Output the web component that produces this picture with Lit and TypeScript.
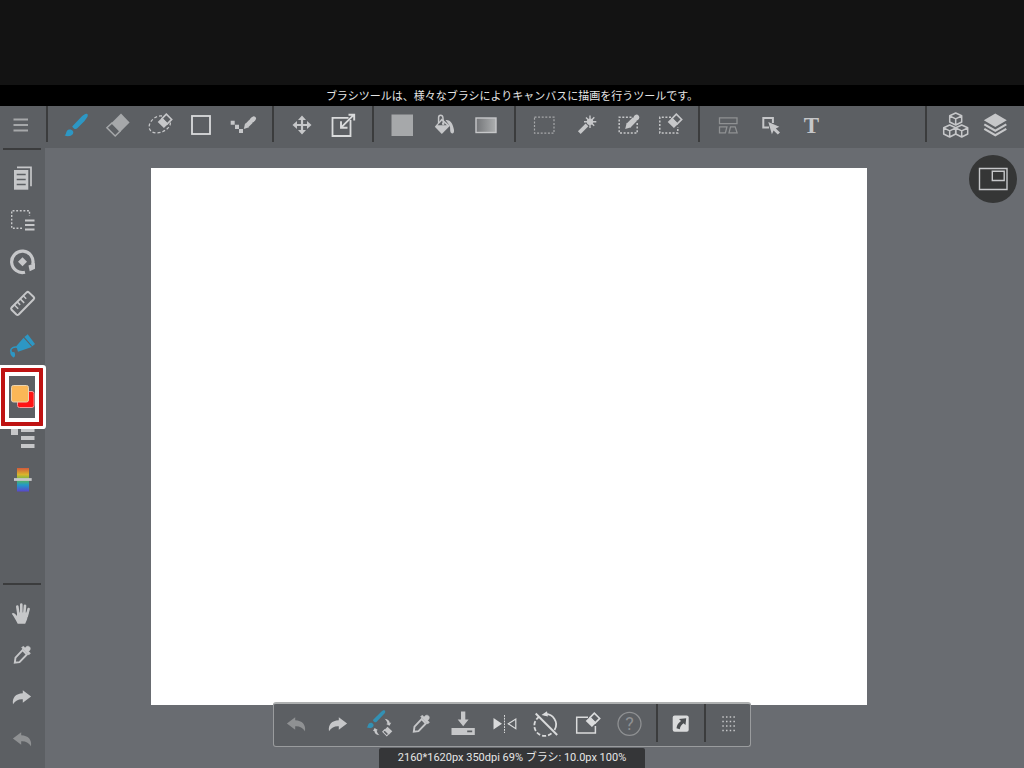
import { LitElement, html, svg, css, TemplateResult, SVGTemplateResult } from "lit";
import { customElement, property, state } from "lit/decorators.js";
import { classMap } from "lit/directives/class-map.js";

/* Small tilted eraser shared by the erasing tools. */
const miniEraser = svg`
  <path d="M22.300 5.200L27.700 10.400L23.300 14.900L18 9.600Z" fill="#5c5f63" stroke="currentColor" stroke-width="1.600"/>
  <path d="M18 8.800L24 14.900L19.900 19L13.700 13Z" fill="currentColor"/>`;

const cube = (x: number, y: number) => svg`
  <path fill="none" stroke="currentColor" stroke-width="1.500" stroke-linejoin="round"
    d="M${x} ${y - 6}l6 2.800v6.200l-6 3-6-3v-6.200zm-6 2.800l6 3 6-3m-6 3v6.200"/>`;

const icons: Record<string, SVGTemplateResult> = {
  menu: svg`<path d="M8.500 10.500h14.500M8.500 16h14.500M8.500 21.500h14.500" stroke="currentColor" stroke-width="1.800"/>`,
  brush: svg`
    <path d="M12.400 17.300L21.700 7.600c1.700-1.700 3.600-3.300 5.100-2.900 1.400.5 1.200 2.300.2 3.800L24.300 12.200 17.300 19.300c-.9.900-2.400.8-3.400.1-1-.7-1.800-1.600-1.500-2.100z" fill="currentColor"/>
    <path d="M4.600 26.300c1.800-.6 1.300-3 2.400-4.500 1.500-1.900 5-1.400 6 .5 1 2.200-.6 4.300-3.200 4.700-2 .3-4 .1-5.200-.7z" fill="currentColor"/>`,
  eraser: svg`
    <path d="M10 14L4.900 18.700 13.200 27 18 22.300z" fill="none" stroke="currentColor" stroke-width="1.500"/>
    <path d="M9.500 14L19 4.500l8.600 8.900L18.300 22.800z" fill="currentColor"/>`,
  lasso: svg`
    <path d="M18 7C12 6 4.500 12.500 5.200 18.500S14 25 19 22.500s8-6 7.300-9.500" fill="none" stroke="currentColor" stroke-width="1.300" stroke-dasharray="3 2"/>
    ${miniEraser}`,
  square: svg`<rect x="6" y="7" width="18" height="18" fill="none" stroke="currentColor" stroke-width="1.800"/>`,
  dotpen: svg`
    <path d="M2.700 11.700h4v4h4.300v4.300h4v4h-4v-4h-4v-4.300h-4.300z" fill="currentColor"/>
    <path d="M15.800 20l1.300-5.700 4 4z" fill="currentColor"/>
    <path d="M18.900 16.500L23 12.300M23.700 11.700l2-2" stroke="currentColor" stroke-width="4.600"/>
    <path d="M23.500 11.800l2.300-2.300" stroke="currentColor" stroke-width="4.400" stroke-linecap="round"/>`,
  move: svg`<path d="M16 6.500l4 4.500h-2.900v3.900H21V12l4.500 4-4.500 4v-2.900h-3.900V21H20l-4 4.500L12 21h2.900v-3.900H11V20l-4.500-4L11 12v2.900h3.900V11H12z" fill="currentColor"/>`,
  transform: svg`
    <path d="M22.500 11V27h-18V8.800h16" fill="none" stroke="currentColor" stroke-width="1.800"/>
    <path d="M13 18.700L26 5.700M20.500 5.700H26.200V11.500M13 12.300V18.700H19.500" fill="none" stroke="currentColor" stroke-width="1.900"/>`,
  fill: svg`<rect x="5.500" y="5.500" width="21.500" height="21.500" fill="currentColor"/>`,
  bucket: svg`
    <path d="M13.700 9.500l8.300 7.300-8.200 8.300-7-7.300z" fill="currentColor"/>
    <path d="M14 11.800l4.800 4.500h-9.300z" fill="#5c5f63"/>
    <path d="M10.600 14V8.500c0-3 4-3 4.300 0l.5 6" fill="none" stroke="currentColor" stroke-width="1.500"/>
    <circle cx="15.200" cy="14.800" r="1.300" fill="currentColor"/>
    <path d="M17.500 11c5.500-.5 7.500 4.500 8.500 10 .6 4.500-3.500 4.500-3.800.8-.2-2 .3-4-1-5.800z" fill="currentColor"/>`,
  gradient: svg`
    <defs><linearGradient id="fade"><stop offset="0" stop-color="#737578"/><stop offset="1" stop-color="#adafb0"/></linearGradient></defs>
    <rect x="6" y="9" width="20" height="14.500" fill="url(#fade)" stroke="currentColor" stroke-width="1.400"/>`,
  select: svg`<rect x="6.500" y="8.200" width="19.500" height="16" fill="none" stroke="currentColor" stroke-width="1.200" stroke-dasharray="2 1.600"/>`,
  wand: svg`
    <path d="M9.300 23.600L17 15.800" stroke="currentColor" stroke-width="3.800"/>
    <circle cx="20" cy="12.700" r="3.200" fill="currentColor"/>
    <path d="M20 6.500v12.500M14 12.700h12.300M16 8.500l8.200 8.300M24.300 8.300L18 15" stroke="currentColor" stroke-width="1.400"/>`,
  selectPen: svg`
    <path d="M19.500 8.300H7.200V24h18V14" fill="none" stroke="currentColor" stroke-width="1.500" stroke-dasharray="2 1.600"/>
    <path d="M13.200 20l1.500-6.200 4.500 4.500z" fill="currentColor"/>
    <path d="M16.600 16.500l6.300-6.400M23.600 9.400l1.700-1.700" stroke="currentColor" stroke-width="5.400"/>
    <path d="M23.800 9.200l1-1" stroke="currentColor" stroke-width="5" stroke-linecap="round"/>`,
  selectEraser: svg`
    <path d="M17 8.300H5.800V24h18v-6" fill="none" stroke="currentColor" stroke-width="1.500" stroke-dasharray="2 1.600"/>
    ${miniEraser}`,
  frames: svg`<path d="M7.500 8.800h17.500v5.900H7.500zM7.500 17.800h7.400l-1.500 6H7.500zM18.500 17.800h4.700l1.900 6h-8.100z" fill="none" stroke="currentColor" stroke-width="1.300"/>`,
  object: svg`
    <path d="M15 18.400H9.300V9h9.600v5" fill="none" stroke="currentColor" stroke-width="2"/>
    <path d="M14.300 13l11 4.800-3.500 1.600 4.200 4-2.200 2.200-4.200-4.200-1.700 3.800z" fill="currentColor"/>`,
  text: svg`<text x="15.500" y="23.500" class="serif" text-anchor="middle" fill="currentColor">T</text>`,
  cubes: svg`${cube(15.700, 10)}${cube(9.700, 22)}${cube(21.700, 22)}`,
  layers: svg`
    <path d="M15.300 4.500l11.500 6.800-11.500 6.700L3.800 11.300z" fill="currentColor"/>
    <path d="M4.300 15.400l11 6.300 11-6.300M4.300 19.900l11 6.300 11-6.300" fill="none" stroke="currentColor" stroke-width="2.200"/>`,
  navigator: svg`<path d="M2.500 5.500h27.500v21H2.500zM15.300 8.300h11.900v9.200H15.300z" fill="none" stroke="currentColor" stroke-width="1.400"/>`,
  pages: svg`
    <path d="M11 5.300h14v19" fill="none" stroke="currentColor" stroke-width="1.700"/>
    <path d="M8 8h14.300v19.700H8z" fill="currentColor"/>
    <path d="M10.700 12.600h9M10.700 17.500h9M10.700 22.400h9" stroke="#5c5f63" stroke-width="1.500"/>`,
  selectList: svg`
    <path d="M16 24.300H5.700V6.700H23.500V12" fill="none" stroke="currentColor" stroke-width="1.400" stroke-dasharray="1.900 1.700"/>
    <path d="M19 16.500h9.500M19 21h9.500M19 25.500h9.500" stroke="currentColor" stroke-width="2"/>`,
  rotate: svg`
    <path d="M19 26.200A10.700 10.700 0 1 1 26.700 18.500" fill="none" stroke="currentColor" stroke-width="3.200"/>
    <path d="M22.500 19.500L29 17v5.700l-5.300 2.600z" fill="currentColor"/>
    <path d="M16.500 11.300l4.500 4.500-4.500 4.500-4.500-4.500z" fill="currentColor"/>`,
  ruler: svg`
    <path d="M20.600 4.400q1.200-1 2.300 0l4.800 4.600q1.100 1.200 0 2.300L12.700 26.500q-1.200 1-2.300 0l-4.800-4.700q-1-1.200 0-2.300z" fill="none" stroke="currentColor" stroke-width="2"/>
    <path d="M8.200 16.800l4 4M11.200 13.900l3 3M14.200 10.900l4 4M17.200 7.800l3 3" stroke="currentColor" stroke-width="1.500"/>`,
  marker: svg`
    <path d="M21.700 4.300l7.300 9.700-2.600 2.300-8-9.300z" fill="currentColor"/>
    <path d="M17.600 7.700l8.200 9.300-13.800 4.800-1.800-5.500z" fill="currentColor"/>
    <path d="M12 17.300c-4-.8-7.500.3-7.400 4.200" fill="none" stroke="currentColor" stroke-width="1.500"/>
    <path d="M5 19.600c-1.500 3.500-.6 5.600 2.300 8 2.300-.7 2.300-3.500.8-5.800-1.200.8-2.300.2-3.100-2.200z" fill="currentColor"/>`,
  colors: svg`
    <rect x="11.500" y="15.500" width="16.500" height="16" rx="2" fill="#ff1414" stroke="#f59a9a"/>
    <rect x="5.500" y="9.500" width="17" height="16.500" rx="2" fill="#fab757" stroke="#e8d3b2"/>`,
  list: svg`<path d="M5 6h7v7H5zM15 6h13.500v4H15zM15 14h13.500v4H15zM15 22h13.500v4H15z" fill="currentColor"/>`,
  spectrum: svg`
    <defs><linearGradient id="hue" x2="0" y2="1">
      <stop offset="0" stop-color="#d25a3c"/><stop offset=".28" stop-color="#d9b52c"/>
      <stop offset=".5" stop-color="#5fb84c"/><stop offset=".72" stop-color="#2299c8"/>
      <stop offset="1" stop-color="#5a46cc"/></linearGradient></defs>
    <rect x="11" y="4" width="12" height="23.500" fill="url(#hue)"/>
    <path d="M8 15.500h17.700" stroke="currentColor" stroke-width="2.800"/>`,
  hand: svg`
    <path d="M11.300 9.500l1.200 8M15.300 7.500v9M19 8.700l-.7 8M22.600 12l-1.800 7" stroke="currentColor" stroke-width="2.600" stroke-linecap="round"/>
    <path d="M5.800 16.700c1-1.500 3-.7 5.200 2.300V15.500h11.500L21 22.500l-1.800 4.300h-7.500C9.800 23 8 19.500 5.800 16.700z" fill="currentColor"/>`,
  dropper: svg`
    <path d="M16.600 11.200l4.300 4.300-7.400 7.600-4.700.6.700-5z" fill="none" stroke="currentColor" stroke-width="1.900"/>
    <path d="M15.600 8.800l1.600-1.600 2 1.700c1-1.800 3.200-2.200 4.400-1s.8 3.400-1 4.400l1.800 2-1.600 1.600z" fill="currentColor" stroke="currentColor" stroke-width=".6"/>`,
  redo: svg`<path d="M16.800 9.300l8.300 6.200-8.300 6.300v-3.600c-4-.3-7.300 1-9.800 5-1-6.500 2.800-10.700 9.800-10.900z" fill="currentColor"/>`,
  undo: svg`<path d="M15.200 9.300l-8.300 6.200 8.300 6.300v-3.600c4-.3 7.300 1 9.800 5 1-6.500-2.800-10.700-9.800-10.900z" fill="currentColor"/>`,
  swap: svg`
    <g fill="#3391b4"><path d="M10.200 11.800L18 4c1.500-1.400 3-2.100 3.900-1.300.8.900.2 2.200-.9 3.400L13.700 13.700c-.9.900-1.900.7-2.700.1-.8-.6-1.200-1.400-.8-2z"/>
    <path d="M3.700 19.300c1.300-.5 1-2.400 2-3.600 1.300-1.500 4-1.100 4.700.6.700 2-.7 3.300-2.500 3.600-1.600.2-3.300 0-4.200-.6z"/></g>
    <path d="M21.500 10.700c3.500.3 5.200 2 5.300 4.300l1.500-.4-1.800 3.200-3.400-1.700 1.300-.5c-.2-2-1.200-3.700-2.900-4.900zM16.500 27.200c-3.200-.3-5-2-5.200-4.300l-1.300.2 1.600-3 3.300 1.800-1.200.5c.2 1.700 1.300 3.500 2.800 4.800z" fill="currentColor"/>
    <path d="M24.500 18.700l4.800 4.500-3.200 3.200-4.700-4.500z" fill="currentColor"/>
    <path d="M21.700 21.800l4 4-1.900 2-4-4z" fill="none" stroke="currentColor" stroke-width="1.100"/>`,
  download: svg`
    <path d="M14 3.500h4.300v8h3.300l-5.400 6.700-5.500-6.700H14z" fill="currentColor"/>
    <path d="M4.500 20h23.300v7H4.500zM20.200 22.600v1.700h5v-1.700z" fill="currentColor" fill-rule="evenodd"/>`,
  flip: svg`
    <path d="M5.500 10l8.500 5.700-8.500 5.800z" fill="currentColor"/>
    <path d="M16.500 7v18" stroke="currentColor" stroke-width="1" stroke-dasharray="1.800 1"/>
    <path d="M27.800 11v9.700l-7.500-4.900z" fill="none" stroke="currentColor" stroke-width="1.200"/>`,
  rotateOff: svg`
    <path d="M14 6.400a10.300 10.300 0 0 1 10.500 15.600" fill="none" stroke="currentColor" stroke-width="1.800"/>
    <path d="M21.500 25.300A10.300 10.300 0 1 1 9 9" fill="none" stroke="currentColor" stroke-width="1.800" stroke-dasharray="4 2"/>
    <path d="M11.500 7l5.500-3.700 1 5.200z" fill="currentColor"/>
    <path d="M5.700 5.500l21.500 21.500" stroke="currentColor" stroke-width="1.900"/>`,
  clear: svg`
    <path d="M16 9.300H4.700V25h18.700v-7" fill="none" stroke="currentColor" stroke-width="1.500"/>
    ${miniEraser}`,
  help: svg`
    <circle cx="16.500" cy="15.800" r="11.500" fill="none" stroke="currentColor" stroke-width="1.300"/>
    <text x="16.500" y="22" class="sans" text-anchor="middle" fill="currentColor">?</text>`,
  shortcut: svg`
    <rect x="7.700" y="7.500" width="16" height="16.300" rx="2" fill="currentColor"/>
    <path d="M14 11l7.200-.7-.7 6.700-2-1.700c-2 1.500-3.300 3-3.700 6l-3.300-1c.3-3.500 2-5.500 4.500-7.300z" fill="#4c4f52"/>`,
  grip: svg`<path d="M10.300 9h13M10.300 13.500h13M10.300 18h13M10.300 22.500h13" stroke="currentColor" stroke-width="1.500" stroke-dasharray="1.500 2.200"/>`,
};

@customElement("tool-button")
export class ToolButton extends LitElement {
  @property() icon = "";
  @property() label = "";
  @property({ type: Boolean }) active = false;

  static styles = css`
    :host {
      display: flex;
      align-items: stretch;
      justify-content: center;
    }
    .button {
      flex: 1;
      display: flex;
      align-items: center;
      justify-content: center;
      margin: 0;
      padding: 0;
      border: 0;
      background: none;
      color: inherit;
      cursor: pointer;
    }
    .active {
      color: #2d97c4;
    }
    .icon {
      display: block;
      flex: none;
      width: 32px;
      height: 32px;
    }
    .serif {
      font: bold 23px "Liberation Serif", serif;
    }
    .sans {
      font: 18px Roboto, sans-serif;
    }
  `;

  render() {
    return html`<button
      class=${classMap({ button: true, active: this.active })}
      type="button"
      aria-label=${this.label}
      aria-pressed=${this.active ? "true" : "false"}
    >
      <svg class="icon" viewBox="0 0 32 32" aria-hidden="true">${icons[this.icon]}</svg>
    </button>`;
  }
}

type Tool = [icon: string, label: string, tone?: "dim" | "mid" | "bright"];

const toolGroups: Tool[][] = [
  [
    ["brush", "ブラシ"],
    ["eraser", "消しゴム", "mid"],
    ["lasso", "投げ縄消しゴム"],
    ["square", "図形", "bright"],
    ["dotpen", "ドットペン"],
  ],
  [
    ["move", "移動"],
    ["transform", "変形", "bright"],
  ],
  [
    ["fill", "塗りつぶし", "mid"],
    ["bucket", "バケツ"],
    ["gradient", "グラデーション"],
  ],
  [
    ["select", "選択", "mid"],
    ["wand", "自動選択"],
    ["selectPen", "選択ペン"],
    ["selectEraser", "選択消しゴム"],
  ],
  [
    ["frames", "コマ割り", "dim"],
    ["object", "操作"],
    ["text", "テキスト"],
  ],
];

const panelTools: Tool[] = [
  ["cubes", "素材"],
  ["layers", "レイヤー"],
];

const sideTop: Tool[] = [
  ["pages", "ページ"],
  ["selectList", "選択メニュー"],
  ["rotate", "回転"],
  ["ruler", "定規"],
  ["marker", "ブラシ設定"],
];

const sideLower: Tool[] = [
  ["list", "ブラシリスト"],
  ["spectrum", "カラーバー"],
];

const sideBottom: Tool[] = [
  ["hand", "手のひら"],
  ["dropper", "スポイト"],
  ["redo", "やり直し"],
  ["undo", "元に戻す", "dim"],
];

const quickTools: Tool[] = [
  ["undo", "元に戻す", "dim"],
  ["redo", "やり直し"],
  ["swap", "ブラシと消しゴムの切替"],
  ["dropper", "スポイト"],
  ["download", "保存"],
  ["flip", "左右反転", "bright"],
  ["rotateOff", "回転リセット", "bright"],
  ["clear", "消去", "bright"],
  ["help", "ヘルプ", "dim"],
];

@customElement("app-root")
export class AppRoot extends LitElement {
  @state() private activeTools = new Set(["brush", "marker"]);

  static styles = css`
    :host {
      display: flex;
      flex-direction: column;
      box-sizing: border-box;
      min-height: 100vh;
      position: relative;
      background: #696c71;
      color: #c6c7c9;
      font-family: Roboto, "Noto Sans CJK JP", sans-serif;
    }
    .blank {
      height: 85px;
      background: #131313;
    }
    .caption {
      margin: 0;
      padding-top: 2px;
      background: #000;
      color: #e4e4e4;
      font-size: 11px;
      line-height: 19px;
      font-weight: 400;
      text-align: center;
    }
    .toolbar {
      display: flex;
      align-items: flex-start;
      height: 42px;
      background: #5c5f63;
    }
    .group {
      display: flex;
      padding: 0 7px;
    }
    .group tool-button {
      width: 42px;
      height: 38px;
    }
    .menu {
      padding: 0 4px 0 0;
    }
    .panels {
      padding: 0 8px 0 9px;
    }
    .panels tool-button {
      width: 40px;
    }
    .rule {
      width: 2px;
      height: 36px;
      background: #3b3c3d;
    }
    .spacer {
      flex: 1;
    }
    .main {
      flex: 1;
      display: flex;
    }
    .side {
      display: flex;
      flex-direction: column;
      width: 45px;
      box-sizing: border-box;
      padding: 0 1px 8px 0;
      background: #5c5f63;
    }
    .side tool-button {
      height: 42px;
    }
    .line {
      height: 2px;
      margin: 0 3px 7px;
      background: #3b3c3d;
    }
    .colour {
      position: relative;
      display: flex;
      flex-direction: column;
    }
    .side .colour tool-button {
      height: 50px;
    }
    .highlight {
      position: absolute;
      inset: 1px 1px -9px;
      border: 4px solid #bf1212;
      border-radius: 1px;
      box-shadow: 0 0 0 3px #fff, inset 0 0 0 4px #fff;
      pointer-events: none;
    }
    .work {
      flex: 1;
      position: relative;
      padding: 20px 157px 0 106px;
    }
    .canvas {
      aspect-ratio: 4 / 3;
      background: #fff;
    }
    .navigator {
      position: absolute;
      top: 7px;
      right: 7px;
      width: 48px;
      height: 48px;
      border-radius: 50%;
      background: #353636;
    }
    .dock {
      position: absolute;
      inset: auto 0 0;
      display: flex;
      flex-direction: column;
      align-items: center;
    }
    .quick {
      display: flex;
      align-items: flex-start;
      padding-bottom: 2px;
      border: 1px solid #9a9c9e;
      border-top: 2px solid #aeb0b0;
      border-radius: 3px;
      background: #5c5f63;
    }
    .actions {
      display: flex;
      width: 375px;
      padding: 0 6px 0 1px;
    }
    .actions tool-button {
      flex: 1;
    }
    .quick tool-button {
      height: 40px;
    }
    .link {
      width: 46px;
    }
    .grip {
      width: 44px;
    }
    .quick .rule {
      height: 38px;
    }
    .status {
      margin: 1px 0 0;
      padding: 0 19px;
      border-radius: 2px 2px 0 0;
      background: #353638;
      color: #e6e6e6;
      font-size: 11px;
      line-height: 20px;
    }
    .bright {
      color: #dadbdc;
    }
    .mid {
      color: #a6a8aa;
    }
    .dim {
      color: #8f9193;
    }
  `;

  private tool([icon, label, tone]: Tool): TemplateResult {
    return html`<tool-button
      class=${tone ?? "plain"}
      icon=${icon}
      label=${label}
      ?active=${this.activeTools.has(icon)}
    ></tool-button>`;
  }

  render() {
    return html`
      <div class="blank"></div>
      <p class="caption">ブラシツールは、様々なブラシによりキャンバスに描画を行うツールです。</p>
      <header class="toolbar">
        <div class="group menu">${this.tool(["menu", "メニュー", "mid"])}</div>
        ${toolGroups.map(
          (group) => html`
            <div class="rule"></div>
            <div class="group">${group.map((t) => this.tool(t))}</div>
          `
        )}
        <div class="spacer"></div>
        <div class="rule"></div>
        <div class="group panels">${panelTools.map((t) => this.tool(t))}</div>
      </header>
      <main class="main">
        <nav class="side">
          <div class="line"></div>
          ${sideTop.map((t) => this.tool(t))}
          <div class="colour">
            ${this.tool(["colors", "カラー"])}
            <div class="highlight"></div>
          </div>
          ${sideLower.map((t) => this.tool(t))}
          <div class="spacer"></div>
          <div class="line"></div>
          ${sideBottom.map((t) => this.tool(t))}
        </nav>
        <section class="work">
          <div class="canvas"></div>
          <tool-button class="navigator" icon="navigator" label="ナビゲーター"></tool-button>
        </section>
      </main>
      <div class="dock">
        <div class="quick">
          <div class="actions">${quickTools.map((t) => this.tool(t))}</div>
          <div class="rule"></div>
          <tool-button class="link bright" icon="shortcut" label="ショートカット"></tool-button>
          <div class="rule"></div>
          <tool-button class="grip" icon="grip" label="移動ハンドル"></tool-button>
        </div>
        <p class="status">2160*1620px 350dpi 69% ブラシ: 10.0px 100%</p>
      </div>
    `;
  }
}
